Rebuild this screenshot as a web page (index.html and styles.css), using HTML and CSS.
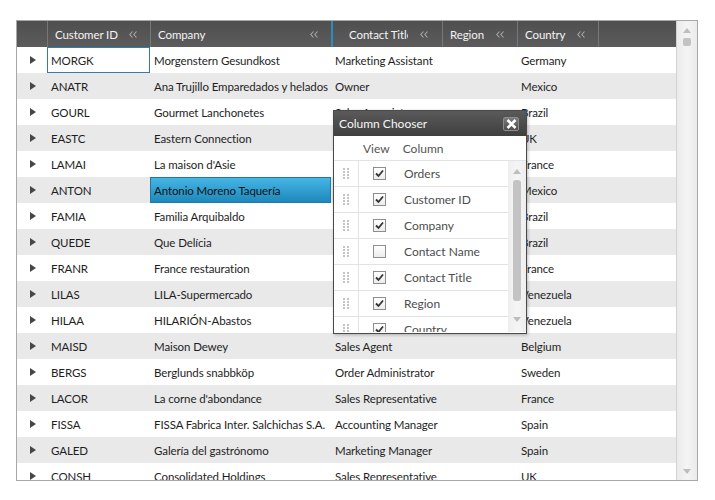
FILE: index.html
```html
<!DOCTYPE html>
<html>
<head>
<meta charset="utf-8">
<link rel="stylesheet" href="styles.css">
</head>
<body>
<div class="page">
  <div class="grid">
    <div class="main">
      <div class="hdr">
        <div class="hcell ind"></div>
        <div class="hcell"><span class="htxt">Customer ID</span><svg class="chev" width="8" height="7" viewBox="0 0 8 7"><polyline points="3.5,0.5 0.8,3.5 3.5,6.5" /><polyline points="7.5,0.5 4.8,3.5 7.5,6.5" /></svg></div>
        <div class="hcell"><span class="htxt">Company</span><svg class="chev" width="8" height="7" viewBox="0 0 8 7"><polyline points="3.5,0.5 0.8,3.5 3.5,6.5" /><polyline points="7.5,0.5 4.8,3.5 7.5,6.5" /></svg></div>
        <div class="hcell drop"><span class="htxt">Contact Title</span><svg class="chev" width="8" height="7" viewBox="0 0 8 7"><polyline points="3.5,0.5 0.8,3.5 3.5,6.5" /><polyline points="7.5,0.5 4.8,3.5 7.5,6.5" /></svg></div>
        <div class="hcell"><span class="htxt">Region</span><svg class="chev" width="8" height="7" viewBox="0 0 8 7"><polyline points="3.5,0.5 0.8,3.5 3.5,6.5" /><polyline points="7.5,0.5 4.8,3.5 7.5,6.5" /></svg></div>
        <div class="hcell"><span class="htxt">Country</span><svg class="chev" width="8" height="7" viewBox="0 0 8 7"><polyline points="3.5,0.5 0.8,3.5 3.5,6.5" /><polyline points="7.5,0.5 4.8,3.5 7.5,6.5" /></svg></div>
        <div class="hcell"></div>
      </div>
      <div class="rows">
        <div class="row"><div class="ind"><span class="tri"></span></div><div class="cell cur">MORGK</div><div class="cell">Morgenstern Gesundkost</div><div class="cell">Marketing Assistant</div><div class="cell"></div><div class="cell">Germany</div><div></div></div>
        <div class="row"><div class="ind"><span class="tri"></span></div><div class="cell">ANATR</div><div class="cell">Ana Trujillo Emparedados y helados</div><div class="cell">Owner</div><div class="cell"></div><div class="cell">Mexico</div><div></div></div>
        <div class="row"><div class="ind"><span class="tri"></span></div><div class="cell">GOURL</div><div class="cell">Gourmet Lanchonetes</div><div class="cell">Sales Associate</div><div class="cell"></div><div class="cell">Brazil</div><div></div></div>
        <div class="row"><div class="ind"><span class="tri"></span></div><div class="cell">EASTC</div><div class="cell">Eastern Connection</div><div class="cell">Sales Agent</div><div class="cell"></div><div class="cell">UK</div><div></div></div>
        <div class="row"><div class="ind"><span class="tri"></span></div><div class="cell">LAMAI</div><div class="cell">La maison d'Asie</div><div class="cell">Accounting Manager</div><div class="cell"></div><div class="cell">France</div><div></div></div>
        <div class="row"><div class="ind"><span class="tri"></span></div><div class="cell">ANTON</div><div class="cell sel">Antonio Moreno Taquería</div><div class="cell">Owner</div><div class="cell"></div><div class="cell">Mexico</div><div></div></div>
        <div class="row"><div class="ind"><span class="tri"></span></div><div class="cell">FAMIA</div><div class="cell">Familia Arquibaldo</div><div class="cell">Marketing Assistant</div><div class="cell"></div><div class="cell">Brazil</div><div></div></div>
        <div class="row"><div class="ind"><span class="tri"></span></div><div class="cell">QUEDE</div><div class="cell">Que Delícia</div><div class="cell">Accounting Manager</div><div class="cell"></div><div class="cell">Brazil</div><div></div></div>
        <div class="row"><div class="ind"><span class="tri"></span></div><div class="cell">FRANR</div><div class="cell">France restauration</div><div class="cell">Marketing Manager</div><div class="cell"></div><div class="cell">France</div><div></div></div>
        <div class="row"><div class="ind"><span class="tri"></span></div><div class="cell">LILAS</div><div class="cell">LILA-Supermercado</div><div class="cell">Accounting Manager</div><div class="cell"></div><div class="cell">Venezuela</div><div></div></div>
        <div class="row"><div class="ind"><span class="tri"></span></div><div class="cell">HILAA</div><div class="cell">HILARIÓN-Abastos</div><div class="cell">Sales Representative</div><div class="cell"></div><div class="cell">Venezuela</div><div></div></div>
        <div class="row"><div class="ind"><span class="tri"></span></div><div class="cell">MAISD</div><div class="cell">Maison Dewey</div><div class="cell">Sales Agent</div><div class="cell"></div><div class="cell">Belgium</div><div></div></div>
        <div class="row"><div class="ind"><span class="tri"></span></div><div class="cell">BERGS</div><div class="cell">Berglunds snabbköp</div><div class="cell">Order Administrator</div><div class="cell"></div><div class="cell">Sweden</div><div></div></div>
        <div class="row"><div class="ind"><span class="tri"></span></div><div class="cell">LACOR</div><div class="cell">La corne d'abondance</div><div class="cell">Sales Representative</div><div class="cell"></div><div class="cell">France</div><div></div></div>
        <div class="row"><div class="ind"><span class="tri"></span></div><div class="cell">FISSA</div><div class="cell">FISSA Fabrica Inter. Salchichas S.A.</div><div class="cell">Accounting Manager</div><div class="cell"></div><div class="cell">Spain</div><div></div></div>
        <div class="row"><div class="ind"><span class="tri"></span></div><div class="cell">GALED</div><div class="cell">Galería del gastrónomo</div><div class="cell">Marketing Manager</div><div class="cell"></div><div class="cell">Spain</div><div></div></div>
        <div class="row"><div class="ind"><span class="tri"></span></div><div class="cell">CONSH</div><div class="cell">Consolidated Holdings</div><div class="cell">Sales Representative</div><div class="cell"></div><div class="cell">UK</div><div></div></div>
      </div>
    </div>
    <div class="vscroll">
      <span class="arr up"></span>
      <span class="knob"></span>
      <span class="fill"></span>
      <span class="arr down"></span>
    </div>
  </div>

  <div class="chooser">
    <div class="ctitle">
      <span>Column Chooser</span>
      <span class="close"><svg width="11" height="10" viewBox="0 0 11 10"><path d="M1.5 1 L9.5 9 M9.5 1 L1.5 9" /></svg></span>
    </div>
    <div class="chead"><span class="hv">View</span><span class="hc">Column</span></div>
    <div class="cbody">
      <div class="clist">
        <div class="citem"><span class="grip"><svg width="6" height="12" viewBox="0 0 6 12"><g><rect x="0" y="0" width="2" height="2"/><rect x="4" y="0" width="2" height="2"/><rect x="0" y="3" width="2" height="2"/><rect x="4" y="3" width="2" height="2"/><rect x="0" y="6" width="2" height="2"/><rect x="4" y="6" width="2" height="2"/><rect x="0" y="9" width="2" height="2"/><rect x="4" y="9" width="2" height="2"/></g></svg></span><span class="cb on"><svg width="11" height="11" viewBox="0 0 11 11"><path d="M2 5.5 L4.5 8 L9 2.5" /></svg></span><span class="cname">Orders</span></div>
        <div class="citem"><span class="grip"><svg width="6" height="12" viewBox="0 0 6 12"><g><rect x="0" y="0" width="2" height="2"/><rect x="4" y="0" width="2" height="2"/><rect x="0" y="3" width="2" height="2"/><rect x="4" y="3" width="2" height="2"/><rect x="0" y="6" width="2" height="2"/><rect x="4" y="6" width="2" height="2"/><rect x="0" y="9" width="2" height="2"/><rect x="4" y="9" width="2" height="2"/></g></svg></span><span class="cb on"><svg width="11" height="11" viewBox="0 0 11 11"><path d="M2 5.5 L4.5 8 L9 2.5" /></svg></span><span class="cname">Customer ID</span></div>
        <div class="citem"><span class="grip"><svg width="6" height="12" viewBox="0 0 6 12"><g><rect x="0" y="0" width="2" height="2"/><rect x="4" y="0" width="2" height="2"/><rect x="0" y="3" width="2" height="2"/><rect x="4" y="3" width="2" height="2"/><rect x="0" y="6" width="2" height="2"/><rect x="4" y="6" width="2" height="2"/><rect x="0" y="9" width="2" height="2"/><rect x="4" y="9" width="2" height="2"/></g></svg></span><span class="cb on"><svg width="11" height="11" viewBox="0 0 11 11"><path d="M2 5.5 L4.5 8 L9 2.5" /></svg></span><span class="cname">Company</span></div>
        <div class="citem"><span class="grip"><svg width="6" height="12" viewBox="0 0 6 12"><g><rect x="0" y="0" width="2" height="2"/><rect x="4" y="0" width="2" height="2"/><rect x="0" y="3" width="2" height="2"/><rect x="4" y="3" width="2" height="2"/><rect x="0" y="6" width="2" height="2"/><rect x="4" y="6" width="2" height="2"/><rect x="0" y="9" width="2" height="2"/><rect x="4" y="9" width="2" height="2"/></g></svg></span><span class="cb"></span><span class="cname">Contact Name</span></div>
        <div class="citem"><span class="grip"><svg width="6" height="12" viewBox="0 0 6 12"><g><rect x="0" y="0" width="2" height="2"/><rect x="4" y="0" width="2" height="2"/><rect x="0" y="3" width="2" height="2"/><rect x="4" y="3" width="2" height="2"/><rect x="0" y="6" width="2" height="2"/><rect x="4" y="6" width="2" height="2"/><rect x="0" y="9" width="2" height="2"/><rect x="4" y="9" width="2" height="2"/></g></svg></span><span class="cb on"><svg width="11" height="11" viewBox="0 0 11 11"><path d="M2 5.5 L4.5 8 L9 2.5" /></svg></span><span class="cname">Contact Title</span></div>
        <div class="citem"><span class="grip"><svg width="6" height="12" viewBox="0 0 6 12"><g><rect x="0" y="0" width="2" height="2"/><rect x="4" y="0" width="2" height="2"/><rect x="0" y="3" width="2" height="2"/><rect x="4" y="3" width="2" height="2"/><rect x="0" y="6" width="2" height="2"/><rect x="4" y="6" width="2" height="2"/><rect x="0" y="9" width="2" height="2"/><rect x="4" y="9" width="2" height="2"/></g></svg></span><span class="cb on"><svg width="11" height="11" viewBox="0 0 11 11"><path d="M2 5.5 L4.5 8 L9 2.5" /></svg></span><span class="cname">Region</span></div>
        <div class="citem"><span class="grip"><svg width="6" height="12" viewBox="0 0 6 12"><g><rect x="0" y="0" width="2" height="2"/><rect x="4" y="0" width="2" height="2"/><rect x="0" y="3" width="2" height="2"/><rect x="4" y="3" width="2" height="2"/><rect x="0" y="6" width="2" height="2"/><rect x="4" y="6" width="2" height="2"/><rect x="0" y="9" width="2" height="2"/><rect x="4" y="9" width="2" height="2"/></g></svg></span><span class="cb on"><svg width="11" height="11" viewBox="0 0 11 11"><path d="M2 5.5 L4.5 8 L9 2.5" /></svg></span><span class="cname">Country</span></div>
      </div>
      <div class="cscroll">
        <span class="arr up"></span>
        <span class="thumb"></span>
        <span class="fill"></span>
        <span class="arr down"></span>
      </div>
    </div>
  </div>
</div>
</body>
</html>
```
FILE: styles.css
```css
* { box-sizing: border-box; }
body {
  margin: 0;
  background: #fff;
  font-family: Lato, "Liberation Sans", sans-serif;
  font-size: 11.5px;
  letter-spacing: -0.1px;
  color: #1e1e1e;
}
.page {
  position: relative;
  padding: 20px 0 0 16px;
}
.grid {
  width: 682px;
  height: 461px;
  border: 1px solid #a8a8a8;
  display: flex;
  overflow: hidden;
}
.main {
  width: 659px;
  overflow: hidden;
}
.hdr, .row {
  display: grid;
  grid-template-columns: 30px 103px 181px 111px 75px 81px 78px;
}
.hdr {
  height: 26px;
  background: linear-gradient(#4f4f4f, #5c5c5c);
  color: #f4f4f4;
}
.hcell {
  display: flex;
  align-items: center;
  border-left: 1px solid #777;
  padding: 0 13px 0 7px;
  min-width: 0;
}
.hcell.ind { border-left: none; }
.hcell.drop {
  border-left: 2px solid #2b8cc0;
  padding-left: 16px;
  padding-right: 14px;
}
.htxt {
  flex: 1;
  white-space: nowrap;
  overflow: hidden;
}
.chev {
  flex: none;
  margin-left: 4px;
  fill: none;
  stroke: #a9a9a9;
  stroke-width: 1.1;
}
.hcell.drop .chev { margin-left: 12px; }
.row {
  height: 26px;
  background: #fff;
}
.row:nth-child(even) { background: #e9e9e9; }
.ind {
  display: flex;
  align-items: center;
  padding-left: 13px;
}
.tri {
  width: 0;
  height: 0;
  border-top: 4px solid transparent;
  border-bottom: 4px solid transparent;
  border-left: 6px solid #474747;
}
.cell {
  display: flex;
  align-items: center;
  padding-left: 4px;
  white-space: nowrap;
  overflow: hidden;
  min-width: 0;
}
.cell.cur {
  border: 1px solid #2f7fa7;
  padding-left: 3px;
  background: #fff;
}
.cell.sel {
  border: 1px solid #1f7aa7;
  padding-left: 3px;
  background: linear-gradient(#45b6e6, #1e88bb);
  color: #111;
}
.vscroll {
  width: 21px;
  border-left: 1px solid #d2d2d2;
  background: linear-gradient(to right, #ebebeb, #f4f4f4 50%, #ebebeb);
  display: flex;
  flex-direction: column;
  align-items: center;
}
.arr {
  width: 0;
  height: 0;
  border-left: 4px solid transparent;
  border-right: 4px solid transparent;
}
.arr.up {
  border-bottom: 5px solid #bdbdbd;
}
.arr.down {
  border-top: 5px solid #bdbdbd;
}
.vscroll .arr.up { margin-top: 7px; }
.vscroll .arr.down { margin-bottom: 6px; }
.knob {
  width: 8px;
  height: 8px;
  border-radius: 2px;
  background: #c3c3c3;
  margin-top: 5px;
}
.fill { flex: 1; }

/* column chooser */
.chooser {
  position: absolute;
  left: 333px;
  top: 110px;
  width: 194px;
  height: 224px;
  border: 1px solid #4a4a4a;
  background: #fff;
  box-shadow: 1px 1px 3px rgba(0,0,0,0.25);
  display: flex;
  flex-direction: column;
  letter-spacing: 0;
}
.ctitle {
  height: 25px;
  flex: none;
  background: linear-gradient(#5a5a5a, #3f3f3f);
  color: #f6f6f6;
  font-size: 12px;
  display: flex;
  align-items: center;
  justify-content: space-between;
  padding: 0 7px 0 5px;
}
.close {
  width: 16px;
  height: 14px;
  border: 1px solid #8c8c8c;
  border-radius: 2px;
  background: linear-gradient(#7a7a7a, #4e4e4e);
  display: flex;
  align-items: center;
  justify-content: center;
}
.close svg {
  stroke: #fff;
  stroke-width: 2.6;
  fill: none;
}
.chead {
  height: 25px;
  flex: none;
  border-bottom: 1px solid #e3e3e3;
  display: flex;
  align-items: center;
  color: #555;
  font-size: 12px;
}
.hv { margin-left: 29px; }
.hc { margin-left: 13px; }
.cbody {
  flex: 1;
  display: flex;
  min-height: 0;
  padding-bottom: 1px;
}
.clist {
  width: 174px;
  overflow: hidden;
}
.citem {
  height: 26px;
  border-bottom: 1px solid #e3e3e3;
  display: flex;
  align-items: center;
}
.grip {
  width: 25px;
  height: 100%;
  border-right: 1px solid #e3e3e3;
  display: flex;
  align-items: center;
  padding-left: 9px;
  flex: none;
}
.grip svg { fill: #c4c4c4; }
.cb {
  width: 13px;
  height: 13px;
  margin-left: 14px;
  border: 1px solid #8e8e8e;
  background: linear-gradient(#fff, #ececec);
  display: flex;
  align-items: center;
  justify-content: center;
  flex: none;
}
.cb svg {
  fill: none;
  stroke: #333;
  stroke-width: 1.8;
}
.cname {
  margin-left: 18px;
  color: #4d4d4d;
  font-size: 12px;
  white-space: nowrap;
}
.cscroll {
  width: 18px;
  background: linear-gradient(to right, #eeeeee, #f5f5f5 50%, #eeeeee);
  display: flex;
  flex-direction: column;
  align-items: center;
}
.cscroll .arr.up { margin-top: 8px; }
.cscroll .arr.down { margin-bottom: 10px; }
.thumb {
  width: 8px;
  height: 121px;
  margin-top: 6px;
  border-radius: 3px;
  background: #c3c3c3;
}
```
